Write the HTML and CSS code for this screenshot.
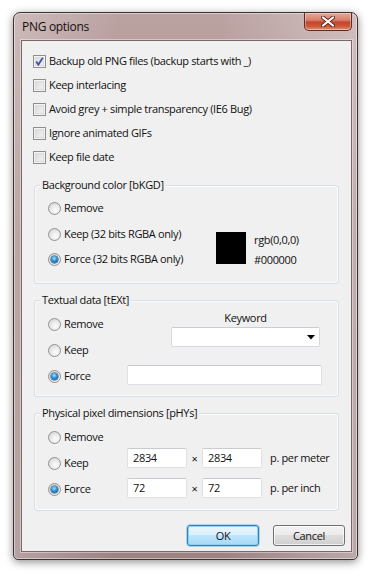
FILE: index.html
```html
<!DOCTYPE html>
<html>
<head>
<meta charset="utf-8">
<link rel="stylesheet" href="styles.css">
</head>
<body>
<div class="window">
  <div class="titlebar">
    <span class="title">PNG options</span>
    <span class="close"><svg width="14" height="11" viewBox="0 0 14 11"><path d="M2 1.5 L12 9.5 M12 1.5 L2 9.5" stroke="#5a2a22" stroke-width="4" stroke-linecap="round"/><path d="M2 1.5 L12 9.5 M12 1.5 L2 9.5" stroke="#fff" stroke-width="2.2" stroke-linecap="round"/></svg></span>
  </div>
  <div class="client">
    <div class="checks">
      <label class="row"><span class="cb checked"><svg width="11" height="11" viewBox="0 0 11 11"><path d="M2.2 5.6 L4.4 8.6 L8.8 1.8" fill="none" stroke="#3f56a6" stroke-width="1.8"/></svg></span>Backup old PNG files (backup starts with _)</label>
      <label class="row"><span class="cb"></span>Keep interlacing</label>
      <label class="row"><span class="cb"></span>Avoid grey + simple transparency (IE6 Bug)</label>
      <label class="row"><span class="cb"></span>Ignore animated GIFs</label>
      <label class="row"><span class="cb"></span>Keep file date</label>
    </div>

    <div class="group g-bkgd">
      <span class="legend">Background color [bKGD]</span>
      <div class="gbody">
        <div class="radios w168">
          <label class="rrow"><span class="rb"></span>Remove</label>
          <label class="rrow"><span class="rb"></span>Keep (32 bits RGBA only)</label>
          <label class="rrow"><span class="rb on"></span>Force (32 bits RGBA only)</label>
        </div>
        <div class="swatch"></div>
        <div class="colortext">
          <div>rgb(0,0,0)</div>
          <div>#000000</div>
        </div>
      </div>
    </div>

    <div class="group g-text">
      <span class="legend">Textual data [tEXt]</span>
      <div class="gbody">
        <div class="radios w79">
          <label class="rrow"><span class="rb"></span>Remove</label>
          <label class="rrow"><span class="rb"></span>Keep</label>
          <label class="rrow"><span class="rb on"></span>Force</label>
        </div>
        <div class="textright">
          <div class="kwblock">
            <div class="kwlabel">Keyword</div>
            <div class="combo"><svg width="8" height="5" viewBox="0 0 8 5"><path d="M0 0 H8 L4 4.5 Z" fill="#000"/></svg></div>
          </div>
          <div class="edit wide"></div>
        </div>
      </div>
    </div>

    <div class="group g-phys">
      <span class="legend">Physical pixel dimensions [pHYs]</span>
      <div class="gbody">
        <div class="radios w79">
          <label class="rrow"><span class="rb"></span>Remove</label>
          <label class="rrow"><span class="rb"></span>Keep</label>
          <label class="rrow"><span class="rb on"></span>Force</label>
        </div>
        <div class="physright">
          <div class="prow">
            <div class="edit num">2834</div><span class="times">×</span><div class="edit num">2834</div><span class="unit">p. per meter</span>
          </div>
          <div class="prow second">
            <div class="edit num">72</div><span class="times">×</span><div class="edit num">72</div><span class="unit">p. per inch</span>
          </div>
        </div>
      </div>
    </div>

    <div class="buttons">
      <button class="btn ok">OK</button>
      <button class="btn">Cancel</button>
    </div>
  </div>
</div>
</body>
</html>
```

FILE: styles.css
```css
html, body {
  margin: 0;
  padding: 0;
  background: #ffffff;
}
body {
  width: 374px;
  height: 575px;
  overflow: hidden;
  font-family: "Open Sans", "Liberation Sans", sans-serif;
  font-size: 11px;
  letter-spacing: -0.35px;
  color: #111;
}
.window {
  margin: 12px 0 0 13px;
  width: 345px;
  height: 548px;
  box-sizing: border-box;
  border: 1px solid #3e3131;
  border-radius: 7px 7px 5px 5px;
  background:
    linear-gradient(90deg, rgba(255,255,255,0.25), rgba(255,255,255,0) 30%, rgba(255,255,255,0) 60%, rgba(255,255,255,0.3)),
    linear-gradient(180deg, #bba3a2, #a68a89 40%, #9d8282);
  box-shadow: 0 2px 9px rgba(0,0,0,0.45), inset 0 0 0 1px rgba(255,255,255,0.45);
  padding: 0 5px 7px 7px;
  display: flex;
  flex-direction: column;
}
.titlebar {
  height: 27px;
  display: flex;
  align-items: flex-start;
  justify-content: space-between;
}
.title {
  font-size: 12px;
  letter-spacing: -0.3px;
  color: #141010;
  margin: 6px 0 0 1px;
  line-height: 16px;
}
.close {
  width: 48px;
  height: 18px;
  margin-right: 0px;
  box-sizing: border-box;
  border: 1px solid #5e2b24;
  border-top: none;
  border-radius: 0 0 5px 5px;
  background: linear-gradient(180deg, #e7a798 0%, #d8826d 40%, #c6452a 55%, #cc5a3c 80%, #e29a7a 100%);
  box-shadow: inset 0 0 0 1px rgba(255,255,255,0.35);
  display: flex;
  align-items: center;
  justify-content: center;
}
.client {
  flex: 1;
  background: #f0f0f0;
  border: 1px solid #7a6767;
  box-shadow: 0 0 0 1px rgba(255,255,255,0.4);
  padding: 8px 6px 5px 11px;
  display: flex;
  flex-direction: column;
}
.checks {
  display: flex;
  flex-direction: column;
}
.row {
  height: 24px;
  display: flex;
  align-items: center;
  line-height: 16px;
}
.cb {
  width: 13px;
  height: 13px;
  box-sizing: border-box;
  border: 1px solid #8f8f8f;
  background: linear-gradient(135deg, #d8d8d8, #f6f6f6);
  box-shadow: inset 0 0 0 1px #f4f4f4, inset 0 0 0 2px #dadada;
  margin-right: 3px;
  display: flex;
  align-items: center;
  justify-content: center;
}
.cb.checked {
  background: linear-gradient(135deg, #dcdcdc, #f2f2f2);
}
.cb svg { display: block; }

.group {
  margin-top: 16px;
  margin-right: 6px;
  margin-left: 1px;
  border: 1px solid #d5dfe5;
  border-radius: 3px;
  box-shadow: inset 0 0 0 1px #fbfcfd;
  padding: 0 6px 11px 13px;
}
.g-bkgd { margin-top: 16px; padding-bottom: 13px; }
.g-phys { padding-bottom: 12px; }
.legend {
  display: block;
  width: fit-content;
  line-height: 16px;
  margin: -9px 0 0 -8px;
  padding: 0 2px;
  background: #f0f0f0;
}
.gbody {
  display: flex;
  align-items: flex-start;
  padding-top: 6px;
}
.g-text .gbody, .g-phys .gbody { padding-top: 7px; }
.radios {
  display: flex;
  flex-direction: column;
  gap: 8px;
}
.w168 { width: 168px; }
.w79 { width: 79px; }
.g-bkgd .radios .rrow:nth-child(3) { margin-top: -1px; }
.rrow {
  height: 18px;
  display: flex;
  align-items: center;
  line-height: 16px;
}
.rb {
  width: 13px;
  height: 13px;
  box-sizing: border-box;
  border-radius: 50%;
  border: 1px solid #929292;
  background: radial-gradient(circle at 60% 65%, #fdfdfd 0%, #e8e8e8 50%, #c9c9c9 100%);
  margin-right: 3px;
  display: flex;
  align-items: center;
  justify-content: center;
}
.rb.on::after {
  content: "";
  width: 7px;
  height: 7px;
  border-radius: 50%;
  background: radial-gradient(circle at 45% 35%, #a9e4ff 0%, #2a8fd4 45%, #0c4a86 100%);
  box-shadow: 0 0 0 0.5px #173f6e;
}
.swatch {
  width: 30px;
  height: 32px;
  background: #000;
  margin-top: 33px;
}
.colortext {
  margin: 31px 0 0 8px;
  line-height: 20px;
}
.textright {
  margin-top: -5px;
  width: 195px;
  display: flex;
  flex-direction: column;
  align-items: flex-end;
}
.kwblock {
  width: 149px;
  margin-right: 2px;
  display: flex;
  flex-direction: column;
}
.kwlabel {
  text-align: center;
  line-height: 16px;
}
.combo {
  margin-top: 1px;
  height: 20px;
  box-sizing: border-box;
  border: 1px solid #d6dae0;
  border-top-color: #c9cdd3;
  border-radius: 2px;
  background: #fff;
  display: flex;
  align-items: center;
  justify-content: flex-end;
  padding-right: 4px;
}
.combo svg { display: block; }
.edit {
  height: 20px;
  box-sizing: border-box;
  border: 1px solid #dde1e6;
  border-top-color: #c6cbd1;
  border-radius: 2px;
  background: #fff;
}
.edit.wide {
  width: 195px;
  margin-top: 18px;
}
.physright {
  margin-top: 20px;
  display: flex;
  flex-direction: column;
  gap: 10px;
}
.prow {
  display: flex;
  align-items: center;
}
.edit.num {
  width: 60px;
  padding-left: 5px;
  line-height: 18px;
}
.times {
  width: 15px;
  text-align: center;
  font-size: 11px;
}
.unit {
  margin-left: 8px;
  margin-top: -2px;
}
.buttons {
  margin-top: auto;
  display: flex;
  justify-content: flex-end;
  gap: 14px;
}
.btn {
  width: 72px;
  height: 21px;
  font-family: inherit;
  font-size: 11px;
  letter-spacing: -0.35px;
  color: #111;
  border: 1px solid #707070;
  border-radius: 3px;
  background: linear-gradient(180deg, #f2f2f2 0%, #ebebeb 50%, #dddddd 50%, #cfcfcf 100%);
  box-shadow: inset 0 0 0 1px rgba(255,255,255,0.7);
  padding: 0;
}
.btn.ok {
  border-color: #3c7fb1;
  background: linear-gradient(180deg, #eaf6fd 0%, #d9f0fc 50%, #bee6fd 50%, #a7d9f5 100%);
  box-shadow: inset 0 0 0 1px #8ed0f6, 0 0 0 0.5px #5fb3e6;
}
```
